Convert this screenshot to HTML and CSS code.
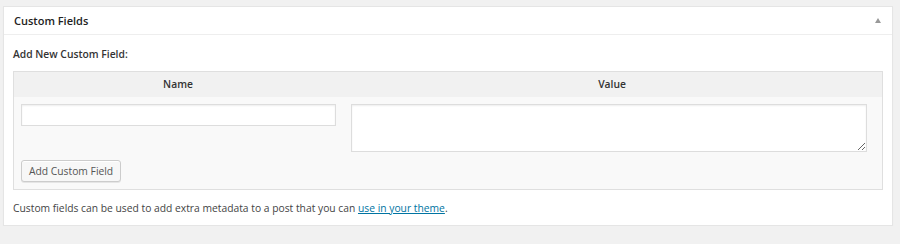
FILE: index.html
```html
<!DOCTYPE html>
<html>
<head>
<meta charset="utf-8">
<link rel="stylesheet" href="styles.css">
</head>
<body>
<div class="wrap">
  <div class="postbox">
    <div class="hndle">
      <span class="title">Custom Fields</span>
      <span class="toggle"></span>
    </div>
    <div class="inside">
      <div class="add-label">Add New Custom Field:</div>
      <div class="meta-table">
        <div class="thead">
          <div class="th">Name</div>
          <div class="th">Value</div>
        </div>
        <div class="row">
          <div class="cell left"><input class="name-input" type="text"></div>
          <div class="cell right"><textarea class="value-input"></textarea></div>
        </div>
        <div class="submit-row">
          <button class="button" type="button">Add Custom Field</button>
        </div>
      </div>
      <p class="note">Custom fields can be used to add extra metadata to a post that you can <a href="#">use in your theme</a>.</p>
    </div>
  </div>
</div>
</body>
</html>
```

FILE: styles.css
```css
html, body {
  margin: 0;
  padding: 0;
  background: #f1f1f1;
  font-family: "Open Sans", "Liberation Sans", sans-serif;
  font-size: 10.3px;
  color: #444;
}

.wrap {
  padding: 6px 7px 0 3px;
}

.postbox {
  background: #fff;
  border: 1px solid #e5e5e5;
  box-shadow: 0 1px 1px rgba(0, 0, 0, 0.04);
}

.hndle {
  height: 27px;
  border-bottom: 1px solid #eee;
  display: flex;
  align-items: center;
  justify-content: space-between;
  padding: 0 11px 0 10px;
}

.title {
  font-size: 11px;
  font-weight: 600;
  color: #222;
  line-height: 20px;
}

.toggle {
  width: 0;
  height: 0;
  border-left: 3px solid transparent;
  border-right: 3px solid transparent;
  border-bottom: 5px solid #999;
  margin-top: -1px;
}

.inside {
  padding: 9px 9px 7px 9px;
}

.add-label {
  font-weight: 600;
  color: #333;
  line-height: 20px;
  margin-bottom: 7px;
}

.meta-table {
  border: 1px solid #dfdfdf;
  background: #f9f9f9;
}

.thead {
  display: grid;
  grid-template-columns: 328px 1fr;
  background: #f1f1f1;
  height: 25px;
}

.th {
  text-align: center;
  font-weight: 600;
  color: #333;
  line-height: 25px;
}

.row {
  display: grid;
  grid-template-columns: 328px 1fr;
  padding-top: 7px;
}

.cell.left {
  padding-left: 7px;
}

.cell.right {
  padding-left: 9px;
}

.name-input,
.value-input {
  box-sizing: border-box;
  border: 1px solid #ddd;
  background: #fff;
  box-shadow: inset 0 1px 2px rgba(0, 0, 0, 0.07);
  margin: 0;
  padding: 3px 5px;
  font-family: inherit;
  font-size: 10.3px;
  display: block;
  outline: none;
}

.name-input {
  width: 315px;
  height: 22px;
}

.value-input {
  width: 516px;
  height: 48px;
  resize: both;
}

.submit-row {
  padding: 8px 7px 7px;
}

.button {
  height: 22px;
  padding: 0 7px;
  margin: 0;
  font-family: inherit;
  font-size: 10.3px;
  color: #555;
  background: #f7f7f7;
  border: 1px solid #ccc;
  border-radius: 3px;
  box-shadow: inset 0 1px 0 #fff, 0 1px 0 rgba(0, 0, 0, 0.08);
  line-height: 20px;
  display: block;
}

.note {
  margin: 8px 0 0 0;
  line-height: 20px;
  color: #444;
}

.note a {
  color: #0074a2;
  text-decoration: underline;
}
```
